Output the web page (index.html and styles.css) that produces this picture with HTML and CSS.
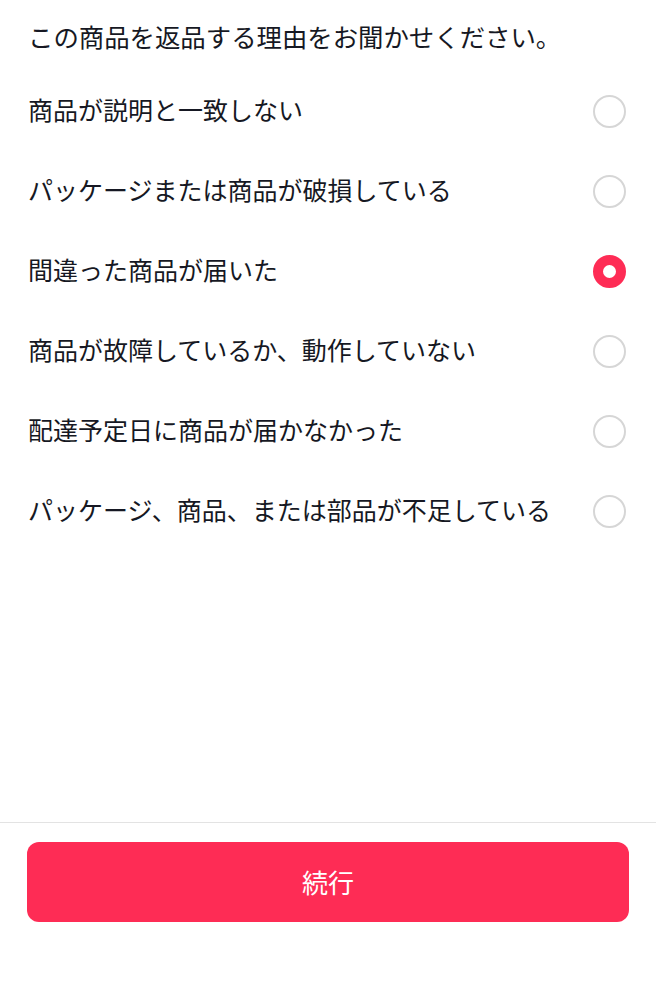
FILE: index.html
```html
<!DOCTYPE html>
<html lang="ja">
<head>
<meta charset="utf-8">
<link rel="stylesheet" href="styles.css">
</head>
<body>
<div class="page">
  <main class="content">
    <h1 class="title">この商品を返品する理由をお聞かせください。</h1>
    <ul class="options">
      <li class="option"><span class="label">商品が説明と一致しない</span><span class="radio"></span></li>
      <li class="option"><span class="label">パッケージまたは商品が破損している</span><span class="radio"></span></li>
      <li class="option"><span class="label">間違った商品が届いた</span><span class="radio checked"></span></li>
      <li class="option"><span class="label">商品が故障しているか、動作していない</span><span class="radio"></span></li>
      <li class="option"><span class="label">配達予定日に商品が届かなかった</span><span class="radio"></span></li>
      <li class="option"><span class="label">パッケージ、商品、または部品が不足している</span><span class="radio"></span></li>
    </ul>
  </main>
  <footer class="footer">
    <button class="continue">続行</button>
  </footer>
</div>
</body>
</html>
```

FILE: styles.css
```css
* { box-sizing: border-box; }
html, body {
  margin: 0;
  padding: 0;
  background: #fff;
}
body {
  font-family: "Noto Sans CJK JP", "Noto Sans", sans-serif;
  color: #161823;
}
.page {
  height: 999px;
  display: flex;
  flex-direction: column;
}
.content {
  flex: 1;
}
.title {
  margin: 0;
  height: 70px;
  padding: 18px 0 0 28px;
  font-size: 25.4px;
  line-height: 36px;
  font-weight: 400;
  white-space: nowrap;
}
.options {
  list-style: none;
  margin: 0;
  padding: 0;
}
.option {
  height: 80px;
  display: flex;
  align-items: center;
  justify-content: space-between;
  padding: 0 30px 0 28px;
}
.label {
  font-size: 25px;
  line-height: 34px;
  white-space: nowrap;
  margin-top: -3px;
}
.radio {
  width: 33px;
  height: 33px;
  border-radius: 50%;
  border: 2.5px solid #d6d6d6;
  flex-shrink: 0;
  margin-top: 2px;
}
.radio.checked {
  border: 10px solid #fe2c55;
  background: #fff;
}
.footer {
  height: 177px;
  border-top: 1px solid #e3e3e3;
  padding: 19px 27px 0 27px;
}
.continue {
  display: block;
  width: 100%;
  height: 80px;
  border: none;
  border-radius: 12px;
  background: #fe2c55;
  color: #fff;
  font-family: "Noto Sans CJK JP", "Noto Sans", sans-serif;
  font-size: 26px;
  line-height: 36px;
  padding: 0;
}
```
